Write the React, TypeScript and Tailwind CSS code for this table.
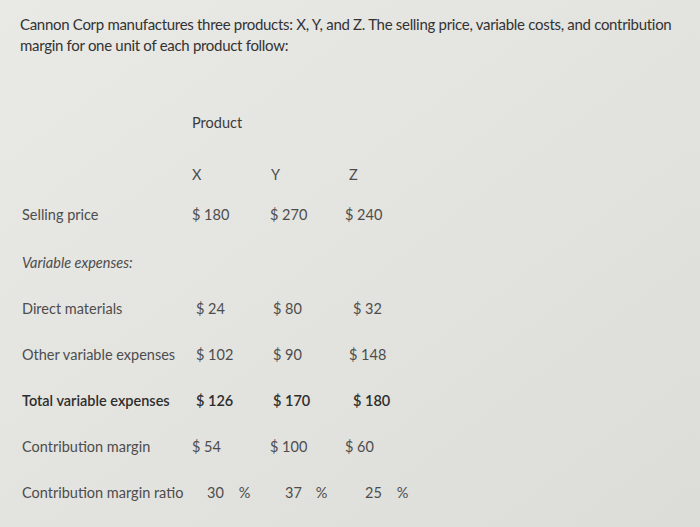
export default function App() {
  const grid = 'grid grid-cols-[170px_78px_75px_100px]';
  return (
    <div className="w-[700px] h-[527px] overflow-hidden bg-gradient-to-br from-[#e9e9e6] via-[#e3e3df] to-[#dcdcd8] text-[#3c3c3c]" style={{ fontFamily: 'Lato, "Open Sans", sans-serif' }}>
      <p className="pl-[20px] pr-2 pt-[14px] text-[15px] leading-[21px] tracking-[-0.3px] text-[#333]">
        Cannon Corp manufactures three products: X, Y, and Z. The selling price, variable costs, and contribution margin for one unit of each product follow:
      </p>

      <div className="pl-[22px] text-[14.5px] leading-[20px] text-[#4d4d4d]">
        <div className={`mt-[57px] ${grid}`}>
          <div />
          <div className="text-[#3c3c3c]">Product</div>
        </div>

        <div className={`mt-[32px] ${grid}`}>
          <div />
          <div>X</div>
          <div className="pl-px">Y</div>
          <div className="pl-[4px]">Z</div>
        </div>

        <div className={`mt-[20px] ${grid}`}>
          <div>Selling price</div>
          <div>$ 180</div>
          <div>$ 270</div>
          <div>$ 240</div>
        </div>

        <div className="mt-[28px] italic">Variable expenses:</div>

        <div className={`mt-[26px] ${grid}`}>
          <div>Direct materials</div>
          <div className="pl-[4px]">$ 24</div>
          <div className="pl-[3px]">$ 80</div>
          <div className="pl-[8px]">$ 32</div>
        </div>

        <div className={`mt-[26px] ${grid}`}>
          <div className="whitespace-nowrap">Other variable expenses</div>
          <div className="pl-[4px]">$ 102</div>
          <div className="pl-[3px]">$ 90</div>
          <div className="pl-[4px]">$ 148</div>
        </div>

        <div className={`mt-[26px] ${grid} font-semibold text-[#2e2e2e]`}>
          <div className="whitespace-nowrap">Total variable expenses</div>
          <div className="pl-[4px]">$ 126</div>
          <div className="pl-[3px]">$ 170</div>
          <div className="pl-[8px]">$ 180</div>
        </div>

        <div className={`mt-[26px] ${grid}`}>
          <div>Contribution margin</div>
          <div>$ 54</div>
          <div>$ 100</div>
          <div>$ 60</div>
        </div>

        <div className={`mt-[26px] ${grid}`}>
          <div className="whitespace-nowrap">Contribution margin ratio</div>
          <div className="pl-[15px] flex gap-[15px]"><span>30</span><span>%</span></div>
          <div className="pl-[15px] flex gap-[14px]"><span>37</span><span>%</span></div>
          <div className="pl-[20px] flex gap-[15px]"><span>25</span><span>%</span></div>
        </div>
      </div>
    </div>
  );
}
